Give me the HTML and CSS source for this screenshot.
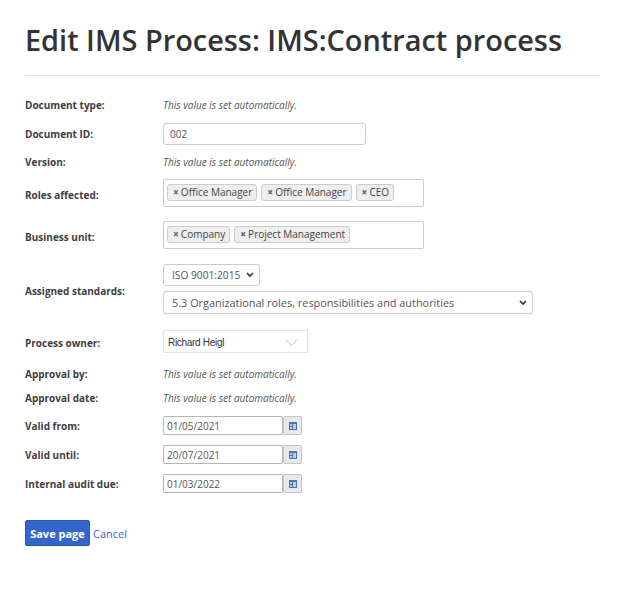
FILE: index.html
```html
<!DOCTYPE html>
<html lang="en">
<head>
<meta charset="utf-8">
<title>Edit IMS Process</title>
<link rel="stylesheet" href="styles.css">
</head>
<body>
<main class="page">
  <h1 class="title">Edit IMS Process: IMS:Contract process</h1>
  <form class="form">
    <div class="row row-text gap-first"><label class="label">Document type:</label><em class="auto">This value is set automatically.</em></div>
    <div class="row gap-8"><label class="label">Document ID:</label><input class="input id-input" type="text" value="002"></div>
    <div class="row row-text gap-7"><label class="label">Version:</label><em class="auto">This value is set automatically.</em></div>
    <div class="row row-box gap-7"><label class="label">Roles affected:</label>
      <div class="tags"><span class="tag"><span class="x">×</span>Office Manager</span><span class="tag"><span class="x">×</span>Office Manager</span><span class="tag"><span class="x">×</span>CEO</span></div>
    </div>
    <div class="row row-box gap-14"><label class="label">Business unit:</label>
      <div class="tags"><span class="tag"><span class="x">×</span>Company</span><span class="tag"><span class="x">×</span>Project Management</span></div>
    </div>
    <div class="row row-box gap-15"><label class="label">Assigned standards:</label>
      <div class="stack">
        <select class="select std-select"><option>ISO 9001:2015</option></select>
        <select class="select clause-select"><option>5.3 Organizational roles, responsibilities and authorities</option></select>
      </div>
    </div>
    <div class="row row-owner gap-16"><label class="label">Process owner:</label>
      <div class="owner"><span>Richard Heigl</span>
        <svg class="owner-chevron" width="13" height="7" viewBox="0 0 13 7"><path d="M.5.5l6 6 6-6" fill="none" stroke="#c4c4c4"/></svg>
      </div>
    </div>
    <div class="row row-text gap-11"><label class="label">Approval by:</label><em class="auto">This value is set automatically.</em></div>
    <div class="row row-text gap-4"><label class="label">Approval date:</label><em class="auto">This value is set automatically.</em></div>
    <div class="row gap-8"><label class="label">Valid from:</label>
      <div class="date"><input class="date-input" type="text" value="01/05/2021"><button class="cal" type="button"><svg width="8" height="8" viewBox="0 0 8 8"><rect width="8" height="8" fill="#4f73ad"/><rect x="1" y="2" width="2" height="2" fill="#b9cbe6"/><rect x="4" y="2" width="3" height="5" fill="#b9cbe6"/><rect x="1" y="5" width="2" height="2" fill="#b9cbe6"/></svg></button></div>
    </div>
    <div class="row gap-10"><label class="label">Valid until:</label>
      <div class="date"><input class="date-input" type="text" value="20/07/2021"><button class="cal" type="button"><svg width="8" height="8" viewBox="0 0 8 8"><rect width="8" height="8" fill="#4f73ad"/><rect x="1" y="2" width="2" height="2" fill="#b9cbe6"/><rect x="4" y="2" width="3" height="5" fill="#b9cbe6"/><rect x="1" y="5" width="2" height="2" fill="#b9cbe6"/></svg></button></div>
    </div>
    <div class="row gap-10"><label class="label">Internal audit due:</label>
      <div class="date"><input class="date-input" type="text" value="01/03/2022"><button class="cal" type="button"><svg width="8" height="8" viewBox="0 0 8 8"><rect width="8" height="8" fill="#4f73ad"/><rect x="1" y="2" width="2" height="2" fill="#b9cbe6"/><rect x="4" y="2" width="3" height="5" fill="#b9cbe6"/><rect x="1" y="5" width="2" height="2" fill="#b9cbe6"/></svg></button></div>
    </div>
    <div class="actions"><button class="save" type="button">Save page</button><a class="cancel" href="#">Cancel</a></div>
  </form>
</main>
</body>
</html>
```
FILE: styles.css
```css
* { box-sizing: border-box; }
html, body { margin: 0; padding: 0; background: #fff; }
body { font-family: "Open Sans", sans-serif; font-size: 10px; color: #404040; }
.page { padding: 0 26px 0 25px; }
.title {
  margin: 0; padding: 21px 0 15px; height: 76px;
  font-size: 28.9px; line-height: 38px; font-weight: 600; color: #333;
  border-bottom: 1px solid #e4e4e4;
  white-space: nowrap;
}
.form { display: flex; flex-direction: column; }
.row { display: flex; align-items: center; }
.row-text { height: 20px; }
.row-box .label { padding-top: 4px; }
.row-owner .label { padding-top: 2px; }
.gap-first { margin-top: 19px; }
.gap-4 { margin-top: 4px; }
.gap-7 { margin-top: 7px; }
.gap-8 { margin-top: 8px; }
.gap-10 { margin-top: 10px; }
.gap-11 { margin-top: 11px; }
.gap-14 { margin-top: 14px; }
.gap-15 { margin-top: 15px; }
.gap-16 { margin-top: 16px; }
.label { width: 138px; flex: none; font-weight: 700; font-size: 10px; color: #404040; }
.auto { font-size: 10px; color: #555; font-style: italic; }
.input, .select, .date-input { font-family: "Open Sans", sans-serif; color: #555; }
.input {
  height: 22px; width: 203px; padding: 0 6px;
  border: 1px solid #ccc; border-radius: 3px; font-size: 10px;
}
.tags {
  width: 261px; height: 28px; padding: 4px 3px;
  display: flex; gap: 4px; align-items: flex-start;
  border: 1px solid #ccc; border-radius: 2px; background: #fff;
}
.tag {
  height: 17px; padding: 0 4px; line-height: 15px;
  font-size: 10px; color: #444; white-space: nowrap;
  background: #eee; border: 1px solid #ccc; border-radius: 3px;
}
.x { font-weight: 800; color: #666; margin-right: 2px; margin-left: 1px; }
.stack { display: flex; flex-direction: column; align-items: flex-start; gap: 5px; }
.select {
  appearance: none; -webkit-appearance: none;
  height: 23px; padding: 0 8px;
  border: 1px solid #ccc; border-radius: 3px; font-size: 10.9px;
  background: #fff url("data:image/svg+xml,%3Csvg xmlns='http://www.w3.org/2000/svg' width='8' height='6'%3E%3Cpath d='M1 1l3 3 3-3' fill='none' stroke='%23333' stroke-width='1.7'/%3E%3C/svg%3E") no-repeat right 5px center;
}
.std-select { width: 97px; height: 22px; font-size: 10.2px; }
.clause-select { width: 370px; }
.owner {
  width: 145px; height: 23px; padding: 1px 4px 0;
  display: flex; align-items: center; justify-content: space-between;
  border: 1px solid #e4e4e4;
  font-family: "Liberation Sans", Arial, sans-serif; font-size: 10px; letter-spacing: -0.3px; color: #333;
}
.owner-chevron { margin-right: 5px; }
.date { display: flex; align-items: center; height: 19px; }
.date-input {
  width: 120px; height: 19px; padding: 0 3px;
  border: 1px solid #b5b5b5; border-radius: 2px; font-size: 10px;
}
.cal {
  width: 19px; height: 19px; padding: 0;
  display: flex; align-items: center; justify-content: center;
  background: #e9e9e9; border: 1px solid #c4c4c4; border-radius: 2px;
}
.actions { display: flex; align-items: center; margin-top: 27px; gap: 3px; }
.save {
  height: 26px; width: 65px; padding: 0;
  font-family: "Open Sans", sans-serif; font-size: 11px; font-weight: 700; color: #fff;
  background: #3366cc; border: 1px solid #2a55ad; border-radius: 2px;
}
.cancel { color: #3366cc; text-decoration: none; font-size: 11px; }
```
